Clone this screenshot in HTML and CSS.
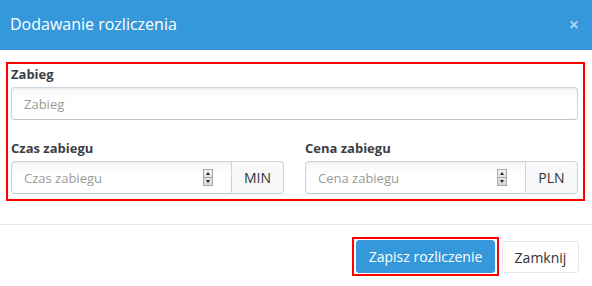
FILE: index.html
```html
<!DOCTYPE html>
<html lang="pl">
<head>
    <meta charset="UTF-8">
    <meta name="viewport" content="width=device-width, initial-scale=1.0">
    <title>Dodawanie rozliczenia</title>
    <link rel="stylesheet" href="styles.css">
</head>
<body>
    <div class="modal">
        <!-- Header -->
        <div class="modal-header">
            <h4 class="modal-title">Dodawanie rozliczenia</h4>
            <span class="close">&times;</span>
        </div>

        <!-- Body -->
        <div class="modal-body">
            <div class="marked">
                <div class="form-group">
                    <label>Zabieg</label>
                    <input type="text" class="form-control" placeholder="Zabieg">
                </div>
                <div class="row">
                    <div class="form-group">
                        <label>Czas zabiegu</label>
                        <div class="input-group">
                            <div class="form-control number">
                                <span class="placeholder">Czas zabiegu</span>
                                <span class="spinner"><i class="up"></i><i class="down"></i></span>
                            </div>
                            <span class="addon">MIN</span>
                        </div>
                    </div>
                    <div class="form-group">
                        <label>Cena zabiegu</label>
                        <div class="input-group">
                            <div class="form-control number">
                                <span class="placeholder">Cena zabiegu</span>
                                <span class="spinner"><i class="up"></i><i class="down"></i></span>
                            </div>
                            <span class="addon">PLN</span>
                        </div>
                    </div>
                </div>
            </div>
        </div>

        <!-- Footer -->
        <div class="modal-footer">
            <span class="marked-btn"><button class="btn btn-primary">Zapisz rozliczenie</button></span>
            <button class="btn btn-default">Zamknij</button>
        </div>
    </div>
</body>
</html>
```

FILE: styles.css
```css
/* Global */
body {
    margin: 0;
    font-family: 'Open Sans', 'Noto Sans', sans-serif;
    background: #fff;
    color: #333;
}

.modal {
    width: 592px;
    height: 286px;
    background: #fff;
}

/* Header */
.modal-header {
    height: 50px;
    background: #3498db;
    display: flex;
    align-items: center;
    justify-content: space-between;
    padding: 0 13px 0 10px;
    box-sizing: border-box;
}

.modal-title {
    margin: 0 0 2px;
    font-size: 16px;
    font-weight: normal;
    color: #fff;
}

.close {
    font-size: 18px;
    font-weight: bold;
    line-height: 1;
    color: #a8d0f0;
    margin-top: -3px;
}

/* Body */
.modal-body {
    padding: 12px 7px 0 6px;
}

.marked {
    border: 2px solid #f00;
    padding: 1px 5px 5px 3px;
}

.form-group label {
    display: block;
    font-size: 13px;
    font-weight: bold;
    color: #3b4046;
    line-height: 18px;
    margin: 0 0 4px;
}

.row {
    display: grid;
    grid-template-columns: 1fr 1fr;
    column-gap: 21px;
    margin-top: 19px;
}

.form-control {
    display: block;
    width: 100%;
    height: 33px;
    box-sizing: border-box;
    padding: 0 12px;
    border: 1px solid #cfd4da;
    border-bottom-color: #bfc5cc;
    border-radius: 4px;
    background: linear-gradient(to bottom, #f7f7f7, #fff 40%);
    box-shadow: inset 0 1px 2px rgba(0, 0, 0, 0.05);
    font-family: inherit;
    font-size: 13px;
    color: #555;
}

.form-control::placeholder,
.placeholder {
    color: #9a9a9a;
}

/* Input group */
.input-group {
    display: flex;
}

.input-group .form-control {
    flex: 1;
    border-radius: 4px 0 0 4px;
    display: flex;
    align-items: center;
    justify-content: space-between;
    padding-right: 18px;
}

.addon {
    width: 52px;
    box-sizing: border-box;
    display: flex;
    align-items: center;
    justify-content: center;
    border: 1px solid #cfd4da;
    border-left: none;
    border-radius: 0 4px 4px 0;
    background: #f6f8fa;
    font-size: 14px;
    color: #333;
}

/* Spinner */
.spinner {
    display: flex;
    flex-direction: column;
    width: 8px;
    height: 15px;
    border: 1px solid #a7a7a7;
    background: linear-gradient(to bottom, #f2f2f2, #d6d6d6);
}

.spinner i {
    flex: 1;
    position: relative;
}

.spinner .up {
    border-bottom: 1px solid #a7a7a7;
}

.spinner i::after {
    content: "";
    position: absolute;
    left: 1.5px;
    top: 2px;
    border-left: 2.5px solid transparent;
    border-right: 2.5px solid transparent;
}

.spinner .up::after {
    border-bottom: 3px solid #222;
}

.spinner .down::after {
    top: 2px;
    border-top: 3px solid #222;
}

/* Footer */
.modal-footer {
    margin-top: 23px;
    border-top: 1px solid #e5e5e5;
    padding: 12px 13px 0 0;
    display: flex;
    justify-content: flex-end;
    align-items: center;
    gap: 3px;
}

.marked-btn {
    border: 2px solid #f00;
    padding: 1px 2px;
    display: flex;
}

.btn {
    height: 33px;
    padding: 0;
    border-radius: 3px;
    font-family: inherit;
    font-size: 14px;
    white-space: nowrap;
    cursor: pointer;
}

.btn-primary {
    width: 139px;
    background: #3498db;
    border: 1px solid #3498db;
    color: #fff;
}

.btn-default {
    width: 77px;
    height: 32px;
    margin-top: 1px;
    background: #fff;
    border: 1px solid #e3e6ea;
    color: #333;
}
```
